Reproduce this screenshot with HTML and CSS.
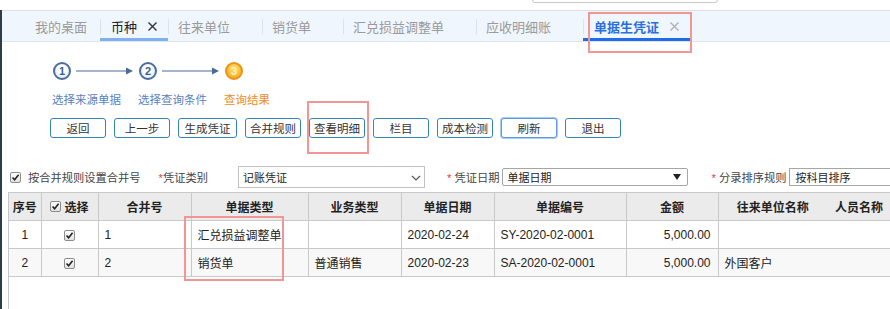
FILE: index.html
```html
<!DOCTYPE html>
<html lang="zh-CN">

<head>
	<meta charset="UTF-8">
	<meta name="viewport" content="width=device-width, initial-scale=1.0">
	<title>单据生凭证</title>

	<link rel="stylesheet" href="styles.css">
</head>

<body>

	<div class="app">
		<div class="top-input"></div>

		<!-- 탭 바 -->
		<ul class="tabs">
			<li class="tab tab-first">我的桌面</li>
			<li class="tab tab-open tab-light">币种<span class="tab-close"><svg width="9" height="9" viewBox="0 0 9 9"><path d="M0.5 0.5L8.5 8.5M8.5 0.5L0.5 8.5" stroke="#333" stroke-width="1.4"/></svg></span></li>
			<li class="tab">往来单位</li>
			<li class="tab">销货单</li>
			<li class="tab">汇兑损益调整单</li>
			<li class="tab">应收明细账</li>
			<li class="tab tab-open tab-active">单据生凭证<span class="tab-close"><svg width="9" height="9" viewBox="0 0 9 9"><path d="M0.5 0.5L8.5 8.5M8.5 0.5L0.5 8.5" stroke="#b0b0b0" stroke-width="1.4"/></svg></span></li>
		</ul>

		<div class="content">
			<!-- 단계 표시 -->
			<div class="steps">
				<div class="step">
					<div class="step-top">
						<span class="step-num">1</span>
						<svg class="step-arrow" width="57" height="8" viewBox="0 0 57 8"><path d="M0 4H51" stroke="#4a6a9a" stroke-width="1.2"/><path d="M50 0.5L57 4L50 7.5Z" fill="#4a6a9a"/></svg>
					</div>
					<div class="step-label">选择来源单据</div>
				</div>
				<div class="step">
					<div class="step-top">
						<span class="step-num">2</span>
						<svg class="step-arrow" width="57" height="8" viewBox="0 0 57 8"><path d="M0 4H51" stroke="#4a6a9a" stroke-width="1.2"/><path d="M50 0.5L57 4L50 7.5Z" fill="#4a6a9a"/></svg>
					</div>
					<div class="step-label">选择查询条件</div>
				</div>
				<div class="step step-current">
					<div class="step-top">
						<span class="step-num">3</span>
					</div>
					<div class="step-label">查询结果</div>
				</div>
			</div>

			<!-- 버튼 -->
			<div class="toolbar">
				<button class="btn">返回</button>
				<button class="btn">上一步</button>
				<button class="btn btn-wide">生成凭证</button>
				<button class="btn">合并规则</button>
				<button class="btn">查看明细</button>
				<button class="btn">栏目</button>
				<button class="btn">成本检测</button>
				<button class="btn btn-focus">刷新</button>
				<button class="btn">退出</button>
			</div>

			<!-- 조건 -->
			<div class="filters">
				<span class="check"></span>
				<span class="filter-text">按合并规则设置合并号</span>
				<span class="filter-label label-type"><i class="req">*</i>凭证类别</span>
				<div class="select select-type">记账凭证<svg class="chev" width="10" height="6" viewBox="0 0 10 6"><path d="M1 1L5 5L9 1" fill="none" stroke="#555" stroke-width="1.2"/></svg></div>
				<span class="filter-label label-date"><i class="req">*</i> 凭证日期</span>
				<div class="select select-date">单据日期<svg class="tri" width="8" height="6" viewBox="0 0 8 6"><path d="M0 0H8L4 6Z" fill="#222"/></svg></div>
				<span class="filter-label label-sort"><i class="req">*</i> 分录排序规则</span>
				<div class="select select-sort">按科目排序</div>
			</div>

			<div class="grid-wrap">
				<table class="grid">
					<colgroup>
						<col style="width:32px">
						<col style="width:57px">
						<col style="width:93px">
						<col style="width:117px">
						<col style="width:93px">
						<col style="width:93px">
						<col style="width:132px">
						<col style="width:92px">
						<col style="width:109px">
						<col style="width:80px">
					</colgroup>
					<thead>
						<tr>
							<th>序号</th>
							<th><span class="th-check"><span class="check"></span>选择</span></th>
							<th>合并号</th>
							<th>单据类型</th>
							<th>业务类型</th>
							<th>单据日期</th>
							<th>单据编号</th>
							<th>金额</th>
							<th class="no-line">往来单位名称</th>
							<th class="no-line th-last">人员名称</th>
						</tr>
					</thead>
					<tbody>
						<tr>
							<td class="center">1</td>
							<td class="center"><span class="check"></span></td>
							<td>1</td>
							<td>汇兑损益调整单</td>
							<td></td>
							<td>2020-02-24</td>
							<td>SY-2020-02-0001</td>
							<td class="num">5,000.00</td>
							<td class="no-line"></td>
							<td class="no-line"></td>
						</tr>
						<tr class="row-alt">
							<td class="center">2</td>
							<td class="center"><span class="check"></span></td>
							<td>2</td>
							<td>销货单</td>
							<td>普通销售</td>
							<td>2020-02-23</td>
							<td>SA-2020-02-0001</td>
							<td class="num">5,000.00</td>
							<td class="no-line">外国客户</td>
							<td class="no-line"></td>
						</tr>
					</tbody>
				</table>
			</div>
		</div>
	</div>

	<!-- 빨간 표시 상자 -->
	<div class="mark mark-tab"></div>
	<div class="mark mark-btn"></div>
	<div class="mark mark-col"></div>

</body>

</html>
```

FILE: styles.css
```css
* {
	padding: 0;
	margin: 0;
	box-sizing: border-box;
}

ul {
	list-style: none;
}

body {
	position: relative;
	height: 309px;
	overflow: hidden;
	font-family: "Liberation Sans", "Noto Sans CJK SC", sans-serif;
	color: #333;
	background: #fff;
}

.app {
	height: 100%;
	border-left: 2px solid #2d3b4b;
}

.top-input {
	position: absolute;
	left: 532px;
	top: -4px;
	width: 186px;
	height: 7px;
	border: 1px solid #c9c9c9;
	border-radius: 3px;
}

/* 탭 */

.tabs {
	display: flex;
	margin-top: 10px;
	height: 32px;
	padding-left: 23px;
	background: #f0f6fd;
	border-top: 1px solid #dedede;
	border-bottom: 1px solid #dfe5ec;
}

.tab {
	position: relative;
	display: flex;
	align-items: center;
	height: 30px;
	padding: 0 32px 0 10px;
	font-size: 13px;
	color: #9a9a9a;
	white-space: nowrap;
}

.tab::before {
	content: "";
	position: absolute;
	left: 0;
	top: 8px;
	width: 1px;
	height: 15px;
	background: #dce2e9;
}

.tab-first {
	padding-right: 13px;
}

.tab-first::before {
	display: none;
}

.tab-open {
	padding: 0 11px;
}

.tab-close {
	display: flex;
	margin-left: 11px;
}

.tab-light {
	color: #222;
}

.tab-light::after,
.tab-active::after {
	content: "";
	position: absolute;
	left: 0;
	right: 0;
	bottom: 0;
	height: 3px;
	background: #80b0f0;
}

.tab-active {
	color: #2a6fe0;
	font-weight: bold;
}

.tab-active::after {
	background: #1f6ce8;
}

/* 단계 */

.steps {
	display: flex;
	margin: 20px 0 0 50px;
}

.step {
	width: 86px;
}

.step-top {
	display: flex;
	align-items: center;
	height: 18px;
}

.step-num {
	display: flex;
	align-items: center;
	justify-content: center;
	width: 18px;
	height: 18px;
	margin-left: 1px;
	border: 2px solid #4a6d9f;
	border-radius: 50%;
	background: radial-gradient(circle at 50% 40%, #ffffff 30%, #d6e4f4 100%);
	font-size: 11px;
	font-weight: bold;
	color: #3b5d91;
}

.step-arrow {
	margin-left: 5px;
}

.step-label {
	margin-top: 12px;
	font-size: 11.5px;
	line-height: 16px;
	color: #5a7fc0;
	white-space: nowrap;
}

.step-current .step-num {
	border-color: #ee9412;
	background: radial-gradient(circle at 50% 35%, #ffd45e 25%, #f59c16 100%);
	color: #fff2c0;
}

.step-current .step-label {
	color: #f08c1c;
}

/* 버튼 */

.toolbar {
	display: flex;
	gap: 8px;
	margin: 10px 0 0 48px;
}

.btn {
	width: 56px;
	height: 20px;
	border: 1px solid #3584b2;
	border-radius: 3px;
	background: #fff;
	font-family: "Liberation Sans", "Noto Sans CJK SC", sans-serif;
	font-size: 11.5px;
	color: #333;
}

.btn-wide {
	width: 59px;
}

.btn-focus {
	border-color: #5a9ae4;
	box-shadow: 0 0 0 1px #a9cbf3;
}

/* 조건 */

.filters {
	display: flex;
	align-items: center;
	height: 22px;
	margin: 28px 0 0 8px;
	font-size: 11.25px;
	white-space: nowrap;
}

.check {
	display: inline-block;
	flex-shrink: 0;
	width: 11px;
	height: 11px;
	border: 1px solid #8c8c8c;
	border-radius: 2px;
	background-image: url("data:image/svg+xml,%3Csvg xmlns='http://www.w3.org/2000/svg' width='9' height='9' viewBox='0 0 9 9'%3E%3Cpath d='M1.5 4.5L3.6 6.8L7.6 1.8' fill='none' stroke='%23222' stroke-width='1.6'/%3E%3C/svg%3E"), linear-gradient(#ffffff, #e2e2e2);
	background-repeat: no-repeat;
	background-position: center;
	vertical-align: middle;
}

.filter-text {
	margin-left: 7px;
	color: #444;
}

.filter-label {
	color: #444;
}

.req {
	font-style: normal;
	color: #e04040;
}

.label-type {
	margin-left: 18px;
}

.label-date {
	margin-left: 22px;
}

.label-sort {
	margin-left: 23px;
}

.select {
	position: relative;
	display: flex;
	align-items: center;
	flex-shrink: 0;
	height: 18px;
	padding-left: 4px;
	border: 1px solid #a6a6a6;
	font-size: 11px;
	color: #222;
	background: #fff;
}

.select-type {
	width: 187px;
	height: 22px;
	margin-left: 30px;
	border-color: #c2c2c2;
}

.select-date {
	width: 186px;
	margin-left: 3px;
	border-radius: 2px;
}

.select-sort {
	width: 110px;
	margin-left: 3px;
	padding-left: 5px;
}

.chev {
	position: absolute;
	right: 3px;
	top: 8px;
}

.tri {
	position: absolute;
	right: 6px;
	top: 5px;
}

/* 표 */

.grid-wrap {
	margin: 4px 0 0 6px;
	height: 130px;
	overflow: hidden;
	border-left: 1px solid #c6c6c6;
}

.grid {
	table-layout: fixed;
	width: 898px;
	border-collapse: collapse;
	font-size: 12px;
}

.grid th,
.grid td {
	height: 28px;
	border: 1px solid #c9c9c9;
	white-space: nowrap;
	overflow: hidden;
}

.grid th:first-child,
.grid td:first-child {
	border-left: none;
}

.grid th {
	background: #ebebeb;
	font-weight: bold;
	color: #222;
	text-align: center;
}

.grid th.th-last {
	text-align: left;
	padding-left: 8px;
}

.grid td {
	padding: 0 6px;
	color: #222;
}

.grid .no-line {
	border-right: none;
}

.grid th.no-line + th.no-line,
.grid td.no-line + td.no-line {
	border-left: none;
}

.grid td.center {
	text-align: center;
}

.grid td.num {
	text-align: right;
	padding-right: 7px;
}

.row-alt td {
	background: #f8f8f8;
}

.th-check {
	display: inline-flex;
	align-items: center;
	gap: 3px;
}

/* 표시 상자 */

.mark {
	position: absolute;
	border: 2px solid #f29595;
}

.mark-tab {
	left: 588px;
	top: 12px;
	width: 104px;
	height: 41px;
}

.mark-btn {
	left: 307px;
	top: 101px;
	width: 62px;
	height: 53px;
}

.mark-col {
	left: 184px;
	top: 216px;
	width: 100px;
	height: 65px;
}
```
